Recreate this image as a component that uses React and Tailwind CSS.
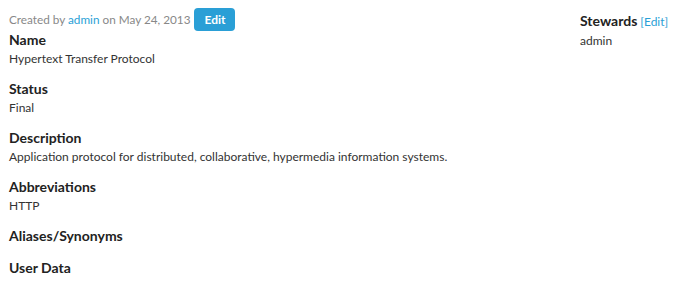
const fields = [
  { label: 'Name', value: 'Hypertext Transfer Protocol' },
  { label: 'Status', value: 'Final' },
  { label: 'Description', value: 'Application protocol for distributed, collaborative, hypermedia information systems.' },
  { label: 'Abbreviations', value: 'HTTP' },
  { label: 'Aliases/Synonyms', value: '' },
  { label: 'User Data', value: '' },
];

const App = () => {
  return (
    <div className="w-[681px] h-[284px] bg-white text-[#333] font-['Lato',sans-serif] text-[12px] overflow-hidden">
      <div className="flex pl-[9px] pt-[8px]">
        <div className="flex-1">
          <div className="flex items-center text-[#888] h-[23px]">
            <span className="text-[11.75px]">
              Created by <a href="#" className="text-[#2a9fd6]">admin</a> on May 24, 2013
            </span>
            <button className="ml-[4px] h-[23px] w-[41px] rounded-[4px] bg-[#2a9fd6] text-white font-bold text-[12px]">
              Edit
            </button>
          </div>
          {fields.map((f, i) => (
            <div key={f.label} className={i === 0 ? '-mt-[1px]' : 'mt-[12px]'}>
              <h4 className="text-[14px] font-bold leading-[20px] text-[#222]">{f.label}</h4>
              {f.value && <div className="leading-[17px]">{f.value}</div>}
            </div>
          ))}
        </div>
        <div className="w-[101px] pt-[2px]">
          <div className="flex items-baseline gap-[3px]">
            <span className="text-[14px] font-bold text-[#222]">Stewards</span>
            <a href="#" className="text-[12px] text-[#2a9fd6]">[Edit]</a>
          </div>
          <div className="mt-[1px]">admin</div>
        </div>
      </div>
    </div>
  );
};

export default App;
